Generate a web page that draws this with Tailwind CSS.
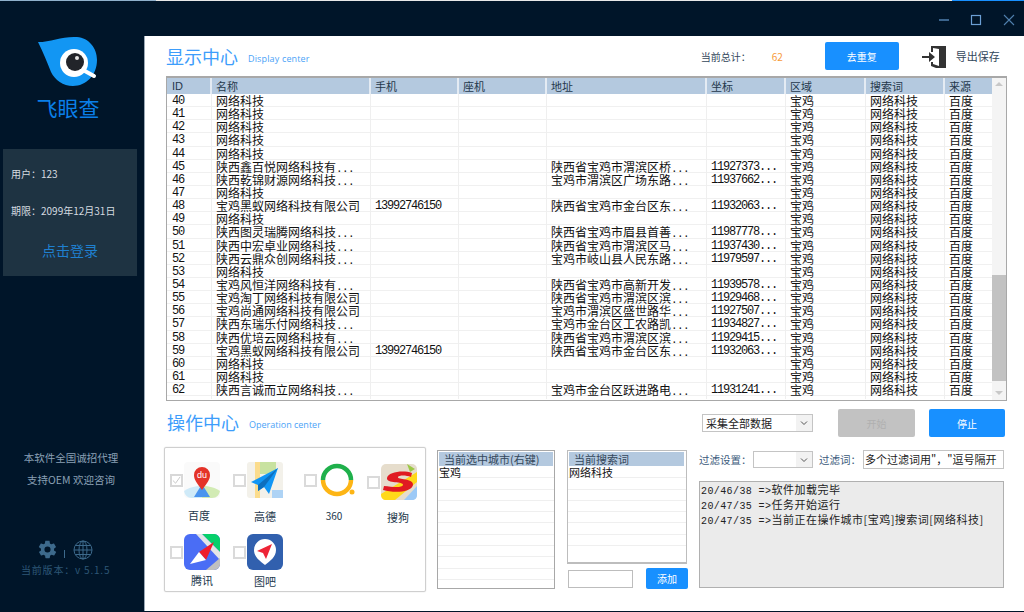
<!DOCTYPE html>
<html lang="zh-CN">
<head>
  <meta charset="UTF-8" />
  <title>飞眼查</title>
  <script src="https://cdn.jsdelivr.net/npm/@tailwindcss/browser@4"></script>
</head>
<body class="w-[1024px] h-[612px] overflow-hidden bg-[#001529] font-['Noto_Sans_CJK_SC',sans-serif]">
  <div class="flex flex-col h-[612px]">
    <!-- strip of the window behind -->
    <div class="h-px flex shrink-0">
      <div class="w-[156px] bg-[#8fb0cc]"></div>
      <div class="flex-1 bg-[#e8e8e8]"></div>
      <div class="w-[72px] bg-[#1890ff]"></div>
    </div>
    <!-- top bar -->
    <div class="h-[35px] flex items-center justify-end shrink-0 pr-[9px] gap-[21px] text-[#4f7fae] pt-0.5">
      <svg class="w-3 h-3" viewBox="0 0 12 12"><path d="M2 6h10" stroke="currentColor" stroke-width="1.5" /></svg>
      <svg class="w-3 h-3" viewBox="0 0 12 12"><rect x="1.5" y="1.5" width="9" height="9" fill="none" stroke="#6b9fd4" stroke-width="1.2" /></svg>
      <svg class="w-3 h-3" viewBox="0 0 12 12"><path d="M1 1l10 10M11 1L1 11" stroke="currentColor" stroke-width="1.1" /></svg>
    </div>

    <div class="flex flex-1 min-h-0 mb-px">
      <!-- sidebar -->
      <aside class="w-[144px] shrink-0 flex flex-col items-stretch relative">
        <div class="h-[113px] flex flex-col items-center">
          <svg class="w-[62px] h-[52px] -ml-[9px]" viewBox="36 36 62 52">
            <path d="M37 42C50 42 62 36 76 37C88 38 96 48 96 60C96 75 85 86 72 86C62 86 54 80 50 72C46 62 42 52 37 42Z" fill="#1296f3" />
            <path d="M82 70L93 76" stroke="#fff" stroke-width="4" stroke-linecap="round" />
            <circle cx="73" cy="63" r="14" fill="#fff" />
            <circle cx="74" cy="62" r="9" fill="#22242a" />
            <circle cx="76" cy="58" r="2" fill="#e5e5e5" />
          </svg>
          <div class="text-[21px] leading-[24px] text-[#0a7fe8] mt-[7px] -ml-[8px]">飞眼查</div>
        </div>
        <div class="mx-[3px] w-[134px] h-[127px] bg-[#1e3342] text-[#d5dbe0] text-[10px] pl-2 flex flex-col">
          <div class="mt-[18px] leading-[14px]">用户：123</div>
          <div class="mt-[23px] leading-[14px]">期限：2099年12月31日</div>
          <div class="mt-[22px] pr-2 text-center text-[14px] leading-5 text-[#1f80d0]">点击登录</div>
        </div>
        <div class="mt-[171px] text-center text-[10.5px] leading-[22px] text-[#8aa0b5] pr-[2px]">
          <div>本软件全国诚招代理</div>
          <div>支持OEM 欢迎咨询</div>
        </div>
        <div class="mt-[48px] flex items-center pl-[37px] text-[#3d6a8c]">
          <svg class="w-[21px] h-[21px]" viewBox="0 0 24 24" fill="currentColor"><path d="M19.4 13c.1-.3.1-.7.1-1s0-.7-.1-1l2.1-1.6c.2-.2.2-.4.1-.6l-2-3.5c-.1-.2-.4-.3-.6-.2l-2.5 1c-.5-.4-1.100-.7-1.700-1l-.4-2.600c0-.3-.2-.4-.5-.4h-4c-.3 0-.5.1-.5.400l-.4 2.600c-.6.300-1.200.6-1.700 1l-2.500-1c-.2-.1-.5 0-.6.200l-2 3.500c-.1.2-.1.400.1.600L4.600 11c-.1.300-.1.700-.1 1s0 .7.1 1l-2.100 1.600c-.2.200-.2.400-.1.600l2 3.500c.1.200.4.300.6.200l2.500-1c.5.400 1.100.7 1.700 1l.4 2.600c0 .3.200.4.500.4h4c.3 0 .5-.1.500-.4l.4-2.600c.6-.3 1.200-.6 1.700-1l2.500 1c.2.100.5 0 .6-.2l2-3.500c.1-.2.100-.4-.1-.6L19.400 13zM12 15.500a3.500 3.500 0 1 1 0-7 3.500 3.500 0 0 1 0 7z" /></svg>
          <div class="ml-[6px] w-px h-2 bg-[#3d6a8c] mt-2"></div>
          <svg class="w-5 h-5 ml-[8px]" viewBox="0 0 20 20" fill="none" stroke="currentColor" stroke-width="1"><circle cx="10" cy="10" r="9" /><ellipse cx="10" cy="10" rx="4" ry="9" /><path d="M10 1v18M1 10h18M2.500 5.500h15M2.500 14.500h15" /></svg>
        </div>
        <div class="mt-[3px] pl-[21px] text-[10px] leading-[14px] tracking-[0.800px] text-[#2d5777] whitespace-nowrap">当前版本：v 5.1.5</div>
      </aside>

      <!-- main -->
      <main class="flex-1 bg-white pl-[19px] pr-[17px] min-w-0 border-l border-[#9aa8b5]">
        <div class="h-10 flex items-center pl-0.5 relative">
          <span class="text-[18px] leading-6 text-[#3d9dfb]">显示中心</span>
          <span class="ml-[10px] mt-[5px] text-[9px] text-[#4aa3f7] font-['Open_Sans',sans-serif] tracking-[0.150px]">Display center</span>
          <span class="ml-[391px] text-[10px] text-[#33475b]">当前总计：</span>
          <span class="ml-[21px] text-[10px] text-[#f79a3a]">62</span>
          <button class="ml-[42px] w-[74px] h-7 rounded-[2px] bg-[#1890ff] text-white text-[10px]">去重复</button>
          <svg class="ml-[23px] w-[24px] h-[22px] mt-[2px]" viewBox="0 0 24 22" fill="#333"><path d="M9 0h15v22H14L9 20v-4h2v2l6 2V3l-6-1v4H9z" /><path d="M0 10h7V6l6 5-6 5v-4H0z" /></svg>
          <span class="ml-[10px] text-[11px] text-[#33475b]">导出保存</span>
        </div>

        <!-- result table -->
        <div class="ml-0.5 w-[841px] h-[325px] border border-[#a8a8a8] border-t-2 relative overflow-hidden">
          <div id="head" class="grid grid-cols-[45px_159px_88px_88px_160px_79px_80px_79px_48px] w-[826px] h-4 bg-[#b4c9df] text-[11px] leading-4 text-[#24384c]">
            <div class="pl-[5px] border-r-2 border-[#e4ebf3] font-['Liberation_Sans',sans-serif]">ID</div>
            <div class="pl-1 border-r-2 border-[#e4ebf3]">名称</div>
            <div class="pl-1 border-r-2 border-[#e4ebf3]">手机</div>
            <div class="pl-1 border-r-2 border-[#e4ebf3]">座机</div>
            <div class="pl-1 border-r-2 border-[#e4ebf3]">地址</div>
            <div class="pl-1 border-r-2 border-[#e4ebf3]">坐标</div>
            <div class="pl-1 border-r-2 border-[#e4ebf3]">区域</div>
            <div class="pl-1 border-r-2 border-[#e4ebf3]">搜索词</div>
            <div class="pl-1">来源</div>
          </div>
          <div id="rows" class="w-[826px]"></div>
          <!-- scrollbar -->
          <div class="absolute right-0 top-0 bottom-0 w-[14px] bg-[#f4f4f4] flex flex-col items-center">
            <div class="mt-[4px] w-0 h-0 border-x-4 border-x-transparent border-b-4 border-b-[#c8c8c8]"></div>
            <div class="mt-[189px] w-[14px] h-[106px] bg-[#c2c2c2]"></div>
            <div class="mt-[10px] w-0 h-0 border-x-4 border-x-transparent border-t-4 border-t-[#c8c8c8]"></div>
          </div>
        </div>

        <!-- operation center -->
        <div class="flex mt-2">
          <div class="w-[524px] shrink-0">
            <div class="h-[38px] pt-[1px] flex items-start pl-[3px]">
              <span class="text-[18px] leading-6 text-[#3d9dfb]">操作中心</span>
              <span class="ml-[10px] mt-[8px] text-[9px] text-[#4aa3f7] font-['Open_Sans',sans-serif]">Operation center</span>
            </div>
            <div class="flex">
              <!-- map sources -->
              <div class="w-[262px] h-[145px] border border-[#cfcfcf] rounded-[2px] pl-[5px] shadow-[0_0_1px_#bbb] text-[#24384c]">
                <div class="grid grid-cols-[63px_71px_63px_auto] mt-[14px] h-[66px]">
                  <div class="flex flex-col">
                    <div class="flex items-center gap-px">
                      <div class="w-[13px] h-[13px] border-2 border-[#d8d8d8] flex items-center justify-center text-[#c4c4c4]"><svg class="w-[9px] h-[9px]" viewBox="0 0 10 10"><path d="M1 5l3 3 5-7" stroke="currentColor" fill="none" /></svg></div>
                      <svg class="w-9 h-9" viewBox="0 0 36 36">
                        <rect width="36" height="36" fill="#fafafa" rx="4" />
                        <path d="M0 29C8 24 14 24 18 24v12H8C3 36 1 33 0 29z" fill="#cfeaf8" />
                        <path d="M36 29c-8-5-14-5-18-5v12h10c5 0 7-3 8-7z" fill="#d2ebb4" />
                        <path d="M18 22l-8 13h16z" fill="#4a94ef" />
                        <path d="M18 28C13 21 10 18 10 13a8 8 0 0 1 16 0c0 5-3 8-8 15z" fill="#e43329" />
                        <text x="18" y="16" text-anchor="middle" font-size="9" fill="#fff" font-family="Liberation Sans">du</text>
                      </svg>
                    </div>
                    <div class="ml-[11px] w-9 mt-[10px] text-center text-[11px] leading-[14px]">百度</div>
                  </div>
                  <div class="flex flex-col">
                    <div class="flex items-center gap-px">
                      <div class="w-[13px] h-[13px] border-2 border-[#dadada]"></div>
                      <svg class="w-9 h-9" viewBox="0 0 36 36">
                        <rect width="36" height="36" fill="#f3f1ea" rx="3" />
                        <rect x="8" width="5" height="36" fill="#fbdc8c" />
                        <rect x="13" width="16" height="12" fill="#c8e2a0" />
                        <rect x="25" y="28" width="11" height="8" fill="#aed3f5" />
                        <path d="M4 20L31 6 22 32 17 25 11 29 11 23z" fill="#1196f5" />
                        <path d="M11 23l20-17-14 19-6 4z" fill="#0d6fbe" />
                      </svg>
                    </div>
                    <div class="ml-[14px] w-9 mt-[11px] text-center text-[11px] leading-[14px]">高德</div>
                  </div>
                  <div class="flex flex-col">
                    <div class="flex items-center gap-[2px]">
                      <div class="w-[13px] h-[13px] border-2 border-[#dadada]"></div>
                      <svg class="w-9 h-9" viewBox="0 0 36 36" fill="none">
                        <path d="M4 18a14 14 0 0 1 28 0" stroke="#1fb04b" stroke-width="4.500" />
                        <path d="M4 18a14 14 0 0 0 28 0" stroke="#fdb515" stroke-width="4.500" />
                        <circle cx="33" cy="30" r="2.500" fill="#fdb515" />
                      </svg>
                    </div>
                    <div class="ml-[12px] w-9 mt-[11px] text-center text-[10px] leading-[14px]">360</div>
                  </div>
                  <div class="flex flex-col">
                    <div class="flex items-center gap-px">
                      <div class="w-[13px] h-[13px] border-2 border-[#dadada] mt-[2px]"></div>
                      <svg class="w-9 h-9 mt-[2px]" viewBox="0 0 36 36">
                        <rect width="36" height="36" rx="5" fill="#e6ddcc" />
                        <path d="M0 30L36 8v10L14 36H5C2 36 0 34 0 30z" fill="#ffd91a" />
                        <path d="M36 22v9c0 3-2 5-5 5h-8z" fill="#9cc9f6" />
                        <path d="M26 0l8 5-5 3z" fill="#9cc846" />
                        <path d="M31 9C22 6 7 8 6 14c-1 6 17 3 16 7-1 3-10 2-19 1l-1 4c10 3 28 3 30-5 1-7-16-5-15-8 1-2 8-2 13 0z" fill="#e01b22" />
                      </svg>
                    </div>
                    <div class="ml-[13px] w-9 mt-[10px] text-center text-[11px] leading-[14px]">搜狗</div>
                  </div>
                </div>
                <div class="grid grid-cols-[63px_71px_63px_auto] mt-[6px]">
                  <div class="flex flex-col">
                    <div class="flex items-center gap-px">
                      <div class="w-[13px] h-[13px] border-2 border-[#dadada]"></div>
                      <svg class="w-9 h-9" viewBox="0 0 36 36">
                        <rect width="36" height="36" rx="6" fill="#4a6df5" />
                        <path d="M18 0h12c3 0 6 3 6 6v12z" fill="#07d06a" />
                        <path d="M12 0h6l18 18v8z" fill="#e3e5e7" />
                        <path d="M22 36l14-12v6c0 3-3 6-6 6z" fill="#c0c0c0" />
                        <path d="M30 8L22 26 15 18z" fill="#ef1c2c" />
                        <path d="M6 30l9-12 7 8z" fill="#fff" />
                      </svg>
                    </div>
                    <div class="ml-[14px] w-9 text-center text-[11px] leading-[14px] mt-[3px]">腾讯</div>
                  </div>
                  <div class="flex flex-col">
                    <div class="flex items-center gap-px">
                      <div class="w-[13px] h-[13px] border-2 border-[#dadada]"></div>
                      <svg class="w-9 h-9" viewBox="0 0 36 36">
                        <rect width="36" height="36" rx="6" fill="#3160ae" />
                        <path d="M18 31C13 27 7 23 7 16a11 11 0 0 1 22 0c0 7-6 11-11 15z" fill="#fff" />
                        <path d="M25 10L10 17l6 2 3 6z" fill="#ee2436" />
                      </svg>
                    </div>
                    <div class="ml-[14px] w-9 text-center text-[11px] leading-[14px] mt-[4px]">图吧</div>
                  </div>
                </div>
              </div>

              <!-- city list -->
              <div class="ml-[11px] mt-[3px] w-[118px] h-[139px] border border-[#a8a8a8] text-[11px] overflow-hidden">
                <div class="h-[14px] m-px ml-[1px] bg-[#b4c9df] leading-[14px] pl-[5px] text-[#33475b]">当前选中城市(右键)</div>
                <div class="h-[11.300px] border-b border-[#efefef] text-[#111] leading-[11px] pl-px">宝鸡</div>
                <div class="h-[11.300px] border-b border-[#efefef]"></div>
                <div class="h-[11.300px] border-b border-[#efefef]"></div>
                <div class="h-[11.300px] border-b border-[#efefef]"></div>
                <div class="h-[11.300px] border-b border-[#efefef]"></div>
                <div class="h-[11.300px] border-b border-[#efefef]"></div>
                <div class="h-[11.300px] border-b border-[#efefef]"></div>
                <div class="h-[11.300px] border-b border-[#efefef]"></div>
                <div class="h-[11.300px] border-b border-[#efefef]"></div>
                <div class="h-[11.300px] border-b border-[#efefef]"></div>
                <div class="h-[11.300px]"></div>
              </div>

              <!-- keyword list -->
              <div class="ml-3 mt-[3px] w-[121px]">
                <div class="w-[120px] h-[114px] border border-[#bdbdbd] border-b-2 text-[11px] overflow-hidden">
                  <div class="h-[14px] m-px mr-0.5 bg-[#b4c9df] leading-[14px] pl-[5px] text-[#33475b]">当前搜索词</div>
                  <div class="h-[11.300px] border-b border-[#efefef] text-[#111] leading-[11px] pl-px">网络科技</div>
                  <div class="h-[11.300px] border-b border-[#efefef]"></div>
                  <div class="h-[11.300px] border-b border-[#efefef]"></div>
                  <div class="h-[11.300px] border-b border-[#efefef]"></div>
                  <div class="h-[11.300px] border-b border-[#efefef]"></div>
                  <div class="h-[11.300px] border-b border-[#efefef]"></div>
                  <div class="h-[11.300px] border-b border-[#efefef]"></div>
                  <div class="h-[11.300px]"></div>
                </div>
                <div class="flex items-center mt-[4px]">
                  <div class="w-[65px] h-[18px] border border-[#bdbdbd] ml-px"></div>
                  <button class="ml-[13px] w-[42px] h-[21px] rounded-[2px] bg-[#1890ff] text-white text-[10px]">添加</button>
                </div>
              </div>
            </div>
          </div>

          <!-- controls and log -->
          <div class="ml-[11px] w-[306px] shrink-0">
            <div class="flex items-center h-[28px]">
              <div class="ml-[3px] w-[111px] h-[18px] border border-[#c4c4c4] flex items-center text-[11px] text-[#222] pl-[3px] justify-between">采集全部数据
                <div class="w-4 h-4 bg-[#f2f2f2] flex items-center justify-center"><svg class="w-2 h-2" viewBox="0 0 8 8"><path d="M1 2.500l3 3 3-3" stroke="#555" fill="none" /></svg></div>
              </div>
              <button class="ml-[25px] w-[77px] h-[28px] rounded-[2px] bg-[#c2c2c2] text-[#b0b0b0] text-[10px]">开始</button>
              <button class="ml-[14px] w-[76px] h-[28px] rounded-[2px] bg-[#1890ff] text-white text-[10px]">停止</button>
            </div>
            <div class="flex items-center h-[19px] mt-[13px] text-[11px] text-[#3b5a7a] whitespace-nowrap">
              <span class="w-[54px] text-[10.5px]">过滤设置：</span>
              <div class="w-[60px] h-[17px] border border-[#c4c4c4] flex items-center justify-end"><div class="w-4 h-[15px] bg-[#f2f2f2] flex items-center justify-center"><svg class="w-2 h-2" viewBox="0 0 8 8"><path d="M1 2.500l3 3 3-3" stroke="#555" fill="none" /></svg></div></div>
              <span class="ml-[6px] w-[44px] text-[10.5px]">过滤词：</span>
              <div class="w-[141px] h-[19px] border border-[#c4c4c4] text-[#222] leading-[17px] overflow-hidden pl-px">多个过滤词用"，"逗号隔开</div>
            </div>
            <div class="mt-3 w-[305px] h-[107px] bg-[#ebebeb] border border-[#b0b0b0] pl-[1px] text-[11px] leading-[15px] text-[#222] tracking-[0.5px]">
              <div class="h-[15px] whitespace-nowrap"><span class="font-['Liberation_Mono'] text-[10px] tracking-[0.400px]">20/46/38 =&gt;</span>软件加载完毕</div>
              <div class="h-[15px] whitespace-nowrap"><span class="font-['Liberation_Mono'] text-[10px] tracking-[0.400px]">20/47/35 =&gt;</span>任务开始运行</div>
              <div class="h-[15px] whitespace-nowrap"><span class="font-['Liberation_Mono'] text-[10px] tracking-[0.400px]">20/47/35 =&gt;</span>当前正在操作城市[宝鸡]搜索词[网络科技]</div>
            </div>
          </div>
        </div>
      </main>
    </div>
  </div>

  <script>
    const rows = [
      [40, '网络科技'], [41, '网络科技'], [42, '网络科技'], [43, '网络科技'], [44, '网络科技'],
      [45, '陕西鑫百悦网络科技有...', '', '陕西省宝鸡市渭滨区桥...', '11927373...'],
      [46, '陕西乾锦财源网络科技...', '', '宝鸡市渭滨区广场东路...', '11937662...'],
      [47, '网络科技'],
      [48, '宝鸡黑蚁网络科技有限公司', '13992746150', '陕西省宝鸡市金台区东...', '11932063...'],
      [49, '网络科技'],
      [50, '陕西图灵瑞腾网络科技...', '', '陕西省宝鸡市眉县首善...', '11987778...'],
      [51, '陕西中宏卓业网络科技...', '', '陕西省宝鸡市渭滨区马...', '11937430...'],
      [52, '陕西云鼎众创网络科技...', '', '宝鸡市岐山县人民东路...', '11979597...'],
      [53, '网络科技'],
      [54, '宝鸡风恒洋网络科技有...', '', '陕西省宝鸡市高新开发...', '11939578...'],
      [55, '宝鸡淘丁网络科技有限公司', '', '陕西省宝鸡市渭滨区滨...', '11929468...'],
      [56, '宝鸡尚通网络科技有限公司', '', '宝鸡市渭滨区盛世路华...', '11927507...'],
      [57, '陕西东瑞乐付网络科技...', '', '宝鸡市金台区工农路凯...', '11934827...'],
      [58, '陕西优培云网络科技有...', '', '陕西省宝鸡市渭滨区滨...', '11929415...'],
      [59, '宝鸡黑蚁网络科技有限公司', '13992746150', '陕西省宝鸡市金台区东...', '11932063...'],
      [60, '网络科技'], [61, '网络科技'],
      [62, '陕西言诚而立网络科技...', '', '宝鸡市金台区跃进路电...', '11931241...'],
    ];
    const dots = s => s.replace('...', '<span class="font-[\'Liberation_Mono\'] text-[11px] tracking-[-0.600px]">...</span>');
    const cell = 'border-r border-[#efefef] pl-1 whitespace-nowrap';
    document.getElementById('rows').innerHTML = rows.map(([id, name, phone = '', addr = '', coord = '']) => `
      <div class="grid grid-cols-[45px_159px_88px_88px_160px_79px_80px_79px_48px] h-[13.150px] leading-[13px] border-b border-[#f0f0f0] text-[12px] text-[#111]">
        <div class="${cell} pl-[5px] font-['Liberation_Mono'] text-[12px] tracking-[-1.200px] leading-[15px]">${id}</div>
        <div class="${cell}">${dots(name)}</div>
        <div class="${cell} font-['Liberation_Mono'] text-[12px] tracking-[-1.200px] leading-[15px]">${phone}</div>
        <div class="${cell}"></div>
        <div class="${cell}">${dots(addr)}</div>
        <div class="${cell} font-['Liberation_Mono'] text-[12px] tracking-[-1.200px] leading-[15px]">${coord}</div>
        <div class="${cell}">宝鸡</div>
        <div class="${cell}">网络科技</div>
        <div class="${cell}">百度</div>
      </div>`).join('');
  </script>
</body>
</html>
